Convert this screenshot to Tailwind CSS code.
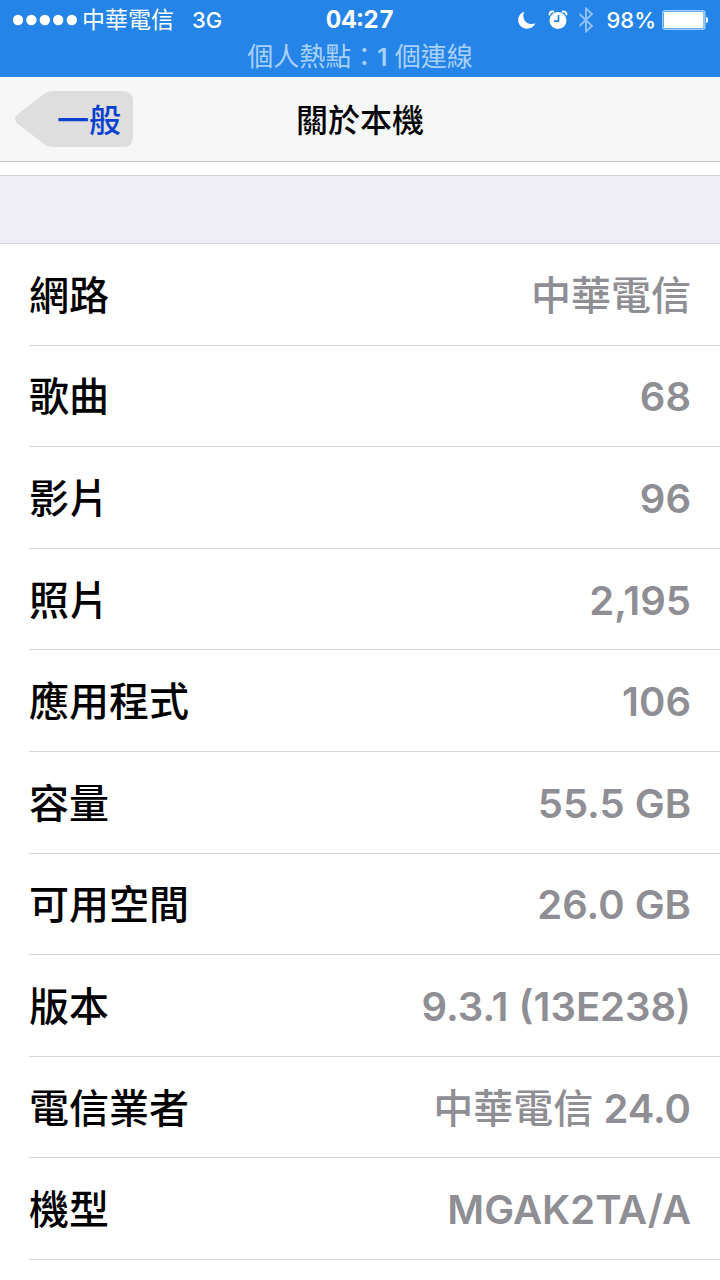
<!DOCTYPE html>
<html lang="zh-Hant">
<head>
<meta charset="utf-8">
<meta name="viewport" content="width=device-width, initial-scale=1">
<title>關於本機</title>
<script src="https://cdn.jsdelivr.net/npm/@tailwindcss/browser@4"></script>
</head>
<body class="flex min-h-screen flex-col bg-white pb-5 font-['Inter','Noto_Sans_CJK_TC',sans-serif] text-black">
  <div class="h-[77px] shrink-0 bg-[#2484e8] text-white">
    <div class="grid h-10 grid-cols-[1fr_auto_1fr] items-center px-3 text-[22px] leading-10">
      <div class="flex items-center">
        <svg class="mr-1 h-3 w-[66px]" viewBox="0 0 66 12" fill="currentColor" aria-label="訊號強度">
          <circle cx="6" cy="6" r="5.2"/><circle cx="19.4" cy="6" r="5.2"/><circle cx="32.8" cy="6" r="5.2"/><circle cx="46.2" cy="6" r="5.2"/><circle cx="59.8" cy="6" r="5.2"/>
        </svg>
        <span class="text-[23px]">中華電信</span>
        <span class="ml-[18px] font-medium">3G</span>
      </div>
      <time class="text-[24px] font-bold tabular-nums">04:27</time>
      <div class="flex items-center justify-end">
        <svg class="mr-3 h-5 w-[18px]" viewBox="0 0 18 20" fill="currentColor" aria-hidden="true">
          <path d="M6.200 1.500C2.600 3 .2 6.200.2 10c0 5 4 8.700 8.900 8.700 3.600 0 6.900-2 8.400-5.400C12 15.200 7.500 13 6 9.200 5 6.500 5.200 3.800 6.200 1.500z"/>
        </svg>
        <svg class="mr-2.5 h-5 w-5" viewBox="0 0 20 20" aria-hidden="true">
          <circle cx="10" cy="10.500" r="8.500" fill="#fff"/>
          <path d="M1.500 4.400C1.600 2.400 3.200 1.300 5.200 1.600M18.500 4.400C18.400 2.400 16.800 1.300 14.800 1.600" fill="none" stroke="#fff" stroke-width="2" stroke-linecap="round"/>
          <path d="M10.500 5v6.200H6" fill="none" stroke="#2484e8" stroke-width="1.700"/>
        </svg>
        <svg class="mr-3 h-[26px] w-4" viewBox="0 0 16 26" fill="none" stroke="#8fc0f4" stroke-width="1.900" aria-hidden="true">
          <path d="M1.500 7l12.500 12-6 5.500v-23L14 7 1.500 19"/>
        </svg>
        <span class="mr-1.5 font-medium">98%</span>
        <svg class="h-5 w-[46px]" viewBox="0 0 46 20" aria-hidden="true">
          <rect x=".8" y=".8" width="42" height="18.400" rx="2.500" fill="none" stroke="#a6cdf7" stroke-width="1.400"/>
          <rect x="2" y="2" width="39.500" height="16" rx="1" fill="#fff"/>
          <path d="M44 7c3 .5 3 5.500 0 6z" fill="#fff"/>
        </svg>
      </div>
    </div>
    <p class="text-center text-[26px] leading-[34px] text-[#a9d0fa]">個人熱點：<span class="text-[24px] font-semibold">1</span> 個連線</p>
  </div>

  <header class="grid h-[85px] shrink-0 grid-cols-[1fr_auto_1fr] items-center border-b border-[#c8c8cb] bg-[#f7f7f7] px-[15px]">
    <button type="button" class="relative h-14 w-[118px] justify-self-start pt-[3px] pr-3 text-right text-[32px] font-medium text-[#0b41cf]">
      <svg class="absolute inset-0 size-full" viewBox="0 0 118 56" fill="#dedede" aria-hidden="true">
        <path d="M37 0H108Q118 0 118 10V46Q118 56 108 56H37Q33 56 29 53L3 33Q-3 28 3 23L29 3Q33 0 37 0Z"/>
      </svg>
      <span class="relative">一般</span>
    </button>
    <h1 class="pt-[3px] text-[32px] leading-10 font-medium">關於本機</h1>
  </header>

  <main class="flex grow flex-col pt-[13px]">
    <div class="h-[69px] shrink-0 border-y border-[#d3d3d7] bg-[#efeff5]"></div>
    <dl class="flex grow flex-col pl-[29px] text-[40px] leading-[60px] font-medium">
      <div class="flex flex-1 items-center justify-between border-b border-[#d6d6d9] pt-[3px] pr-[29px]"><dt>網路</dt><dd class="text-[#8e8e94]">中華電信</dd></div>
      <div class="flex flex-1 items-center justify-between border-b border-[#d6d6d9] pt-[3px] pr-[29px]"><dt>歌曲</dt><dd class="font-semibold text-[#8e8e94]">68</dd></div>
      <div class="flex flex-1 items-center justify-between border-b border-[#d6d6d9] pt-[3px] pr-[29px]"><dt>影片</dt><dd class="font-semibold text-[#8e8e94]">96</dd></div>
      <div class="flex flex-1 items-center justify-between border-b border-[#d6d6d9] pt-[3px] pr-[29px]"><dt>照片</dt><dd class="font-semibold text-[#8e8e94]">2,195</dd></div>
      <div class="flex flex-1 items-center justify-between border-b border-[#d6d6d9] pt-[3px] pr-[29px]"><dt>應用程式</dt><dd class="font-semibold text-[#8e8e94]">106</dd></div>
      <div class="flex flex-1 items-center justify-between border-b border-[#d6d6d9] pt-[3px] pr-[29px]"><dt>容量</dt><dd class="font-semibold text-[#8e8e94]">55.5 GB</dd></div>
      <div class="flex flex-1 items-center justify-between border-b border-[#d6d6d9] pt-[3px] pr-[29px]"><dt>可用空間</dt><dd class="font-semibold text-[#8e8e94]">26.0 GB</dd></div>
      <div class="flex flex-1 items-center justify-between border-b border-[#d6d6d9] pt-[3px] pr-[29px]"><dt>版本</dt><dd class="font-semibold text-[#8e8e94]">9.3.1 (13E238)</dd></div>
      <div class="flex flex-1 items-center justify-between border-b border-[#d6d6d9] pt-[3px] pr-[29px]"><dt>電信業者</dt><dd class="text-[#8e8e94]">中華電信<span class="font-semibold"> 24.0</span></dd></div>
      <div class="flex flex-1 items-center justify-between border-b border-[#d6d6d9] pt-[3px] pr-[29px]"><dt>機型</dt><dd class="font-semibold text-[#8e8e94]">MGAK2TA/A</dd></div>
    </dl>
  </main>
</body>
</html>
